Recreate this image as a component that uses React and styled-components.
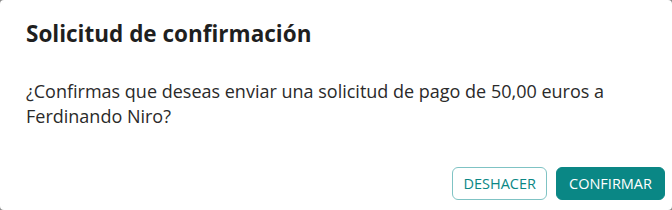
import React from 'react';
import styled, { createGlobalStyle } from 'styled-components';

const GlobalStyle = createGlobalStyle`
  html, body {
    margin: 0;
    padding: 0;
    background: #8a8a8a;
  }
  * { box-sizing: border-box; }
`;

const Dialog = styled.div`
  width: 672px;
  height: 210px;
  background: #ffffff;
  border-radius: 4px;
  display: flex;
  flex-direction: column;
  font-family: "Open Sans", "Liberation Sans", sans-serif;
  color: #222222;
`;

const Title = styled.h2`
  margin: 0;
  padding: 20px 26px 0;
  font-size: 22.5px;
  font-weight: 700;
  line-height: 28px;
  color: #1f1f1f;
`;

const Content = styled.p`
  margin: 0;
  padding: 31px 26px 0;
  font-size: 18px;
  line-height: 25px;
  color: #2a2a2a;
  max-width: 660px;
`;

const Actions = styled.div`
  margin-top: auto;
  display: flex;
  justify-content: flex-end;
  gap: 9px;
  padding: 0 7px 10px;
`;

const Button = styled.button`
  font-family: "Open Sans", "Liberation Sans", sans-serif;
  font-size: 14.5px;
  text-transform: uppercase;
  height: 33px;
  padding: 0 ${p => (p.$primary ? '12px' : '10px')};
  border-radius: 6px;
  cursor: pointer;
  border: 1px solid ${p => (p.$primary ? '#0a8785' : '#7fc3c4')};
  background: ${p => (p.$primary ? '#0a8785' : '#ffffff')};
  color: ${p => (p.$primary ? '#ffffff' : '#0a8785')};
`;

export default function App() {
  return (
    <>
      <GlobalStyle />
      <Dialog>
        <Title>Solicitud de confirmación</Title>
        <Content>
          ¿Confirmas que deseas enviar una solicitud de pago de 50,00 euros a Ferdinando Niro?
        </Content>
        <Actions>
          <Button>Deshacer</Button>
          <Button $primary>Confirmar</Button>
        </Actions>
      </Dialog>
    </>
  );
}
